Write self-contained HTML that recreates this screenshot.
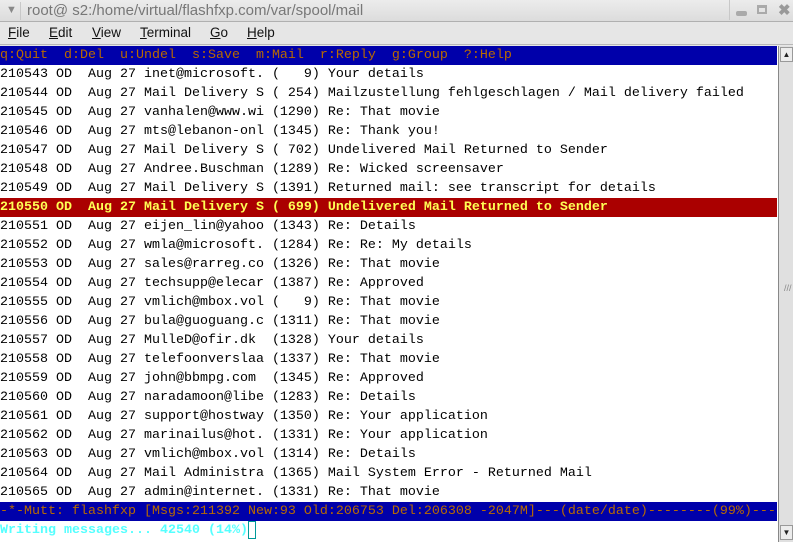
<!DOCTYPE html>
<html><head><meta charset="utf-8"><style>
*{margin:0;padding:0;box-sizing:border-box}
body{width:793px;height:542px;overflow:hidden;background:#e6e6e6;font-family:"Liberation Sans",sans-serif;position:relative}
#title{position:absolute;left:0;top:0;width:793px;height:22px;background:linear-gradient(#ececec,#dcdcdc);border-bottom:1px solid #b0b0b0;font-size:15px;color:#777}
#title .t{position:absolute;left:27px;top:2px}
#title .dd{position:absolute;left:6px;top:4px;font-size:11px;color:#888}
#title .sep{position:absolute;left:20px;top:2px;width:1px;height:18px;background:#c8c8c8}
#title .btns{position:absolute;left:729px;top:0;width:64px;height:20px;border-left:1px solid #c8c8c8;color:#999;font-size:13px}
#menu{position:absolute;left:0;top:22px;width:793px;height:23px;border-bottom:1px solid #b8b8b8;font-size:13.5px;color:#111}
#menu span{position:absolute;top:3px}
#term{position:absolute;left:0;top:46px;width:778px;height:496px;background:#fff;font-family:"Liberation Mono",monospace;font-size:13.33px;}
.r{position:absolute;left:0;height:19px;line-height:19px;white-space:pre;width:777px}
.b{background:#0000aa;color:#b86a00}
.h{background:#aa0000;color:#ffff55;font-weight:bold}
.c{color:#55ffff;font-weight:bold}
#sb{position:absolute;left:778px;top:46px;width:15px;height:496px;background:#e0e0e0;border-left:1px solid #888}
#sb .a{position:absolute;left:1px;width:13px;height:15px;background:#ececec;border:1px solid #999;font-size:8px;text-align:center;line-height:13px;color:#222}
</style></head><body>
<div id="title"><span class="dd">&#9660;</span><div class="sep"></div><span class="t">root@ s2:/home/virtual/flashfxp.com/var/spool/mail</span>
<div class="btns"><span style="position:absolute;left:6px;top:5px;width:11px;height:5px;background:#aaa;border-radius:2px;top:11px"></span><span style="position:absolute;left:27px;top:5px;width:10px;height:9px;border:2px solid #aaa;border-top-width:3px"></span><span style="position:absolute;left:48px;top:1px;font-weight:bold;font-size:15px">&#10006;</span></div></div>
<div id="menu"><span style="left:8px"><u>F</u>ile</span><span style="left:49px"><u>E</u>dit</span><span style="left:92px"><u>V</u>iew</span><span style="left:140px"><u>T</u>erminal</span><span style="left:210px"><u>G</u>o</span><span style="left:247px"><u>H</u>elp</span></div>
<div id="term">
<div class="r b" style="top:0">q:Quit  d:Del  u:Undel  s:Save  m:Mail  r:Reply  g:Group  ?:Help</div>
<div class="r" style="top:19px">210543 OD  Aug 27 inet@microsoft. (   9) Your details</div>
<div class="r" style="top:38px">210544 OD  Aug 27 Mail Delivery S ( 254) Mailzustellung fehlgeschlagen / Mail delivery failed</div>
<div class="r" style="top:57px">210545 OD  Aug 27 vanhalen@www.wi (1290) Re: That movie</div>
<div class="r" style="top:76px">210546 OD  Aug 27 mts@lebanon-onl (1345) Re: Thank you!</div>
<div class="r" style="top:95px">210547 OD  Aug 27 Mail Delivery S ( 702) Undelivered Mail Returned to Sender</div>
<div class="r" style="top:114px">210548 OD  Aug 27 Andree.Buschman (1289) Re: Wicked screensaver</div>
<div class="r" style="top:133px">210549 OD  Aug 27 Mail Delivery S (1391) Returned mail: see transcript for details</div>
<div class="r h" style="top:152px">210550 OD  Aug 27 Mail Delivery S ( 699) Undelivered Mail Returned to Sender</div>
<div class="r" style="top:171px">210551 OD  Aug 27 eijen_lin@yahoo (1343) Re: Details</div>
<div class="r" style="top:190px">210552 OD  Aug 27 wmla@microsoft. (1284) Re: Re: My details</div>
<div class="r" style="top:209px">210553 OD  Aug 27 sales@rarreg.co (1326) Re: That movie</div>
<div class="r" style="top:228px">210554 OD  Aug 27 techsupp@elecar (1387) Re: Approved</div>
<div class="r" style="top:247px">210555 OD  Aug 27 vmlich@mbox.vol (   9) Re: That movie</div>
<div class="r" style="top:266px">210556 OD  Aug 27 bula@guoguang.c (1311) Re: That movie</div>
<div class="r" style="top:285px">210557 OD  Aug 27 MulleD@ofir.dk  (1328) Your details</div>
<div class="r" style="top:304px">210558 OD  Aug 27 telefoonverslaa (1337) Re: That movie</div>
<div class="r" style="top:323px">210559 OD  Aug 27 john@bbmpg.com  (1345) Re: Approved</div>
<div class="r" style="top:342px">210560 OD  Aug 27 naradamoon@libe (1283) Re: Details</div>
<div class="r" style="top:361px">210561 OD  Aug 27 support@hostway (1350) Re: Your application</div>
<div class="r" style="top:380px">210562 OD  Aug 27 marinailus@hot. (1331) Re: Your application</div>
<div class="r" style="top:399px">210563 OD  Aug 27 vmlich@mbox.vol (1314) Re: Details</div>
<div class="r" style="top:418px">210564 OD  Aug 27 Mail Administra (1365) Mail System Error - Returned Mail</div>
<div class="r" style="top:437px">210565 OD  Aug 27 admin@internet. (1331) Re: That movie</div>
<div class="r b" style="top:456px">-*-Mutt: flashfxp [Msgs:211392 New:93 Old:206753 Del:206308 -2047M]---(date/date)--------(99%)---</div>
<div class="r c" style="top:475px">Writing messages... 42540 (14%)<span style="display:inline-block;width:8px;height:18px;border:1px solid #009999;vertical-align:top"></span></div>
</div>
<div id="sb"><div class="a" style="top:1px">&#9650;</div><div style="position:absolute;left:5px;top:240px;font-size:9px;color:#888;line-height:5px">///</div><div class="a" style="top:479px">&#9660;</div></div>
</body></html>
